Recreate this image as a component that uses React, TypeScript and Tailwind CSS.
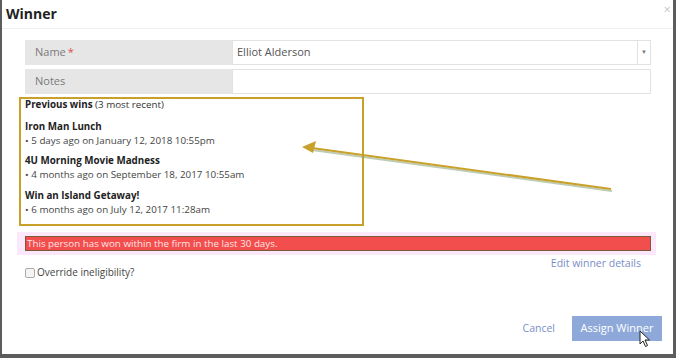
import React from "react";

const wins = [
  { title: "Iron Man Lunch", when: "5 days ago on January 12, 2018 10:55pm", gap: "mt-[9px]" },
  { title: "4U Morning Movie Madness", when: "4 months ago on September 18, 2017 10:55am", gap: "mt-[6px]" },
  { title: "Win an Island Getaway!", when: "6 months ago on July 12, 2017 11:28am", gap: "mt-[7px]" },
];

function Arrow() {
  return (
    <svg className="pointer-events-none absolute left-0 top-0" width="676" height="358" aria-hidden>
      <line x1="612" y1="191" x2="312" y2="150" stroke="#7f9a6a" strokeWidth="2" opacity="0.5" />
      <line x1="611" y1="189" x2="312" y2="148" stroke="#c9a12a" strokeWidth="2" />
      <path d="M302 147 L316 141 L313 153 Z" fill="#c9a12a" />
    </svg>
  );
}

function Cursor() {
  return (
    <svg className="absolute left-[639px] top-[330px]" width="12" height="18" viewBox="0 0 12 18" aria-hidden>
      <path d="M1 1 L1 14 L4 11 L6.5 16.5 L8.5 15.5 L6 10 L10.5 10 Z" fill="#fff" stroke="#222" strokeWidth="1" />
    </svg>
  );
}

export default function App() {
  return (
    <div
      className="relative w-[676px] h-[358px] overflow-hidden bg-[#5c5c5c] pl-[2px] pr-[3px] pb-[4px]"
      style={{ fontFamily: "'Open Sans', 'Liberation Sans', sans-serif" }}
    >
      <div className="flex h-full flex-col bg-white">
        {/* header */}
        <div className="flex h-[29px] shrink-0 items-center justify-between border-b border-[#efefef] pl-[4px] pr-[2px]">
          <span className="mb-[2px] text-[14px] font-bold text-[#222]">Winner</span>
          <span className="mb-[10px] text-[13px] leading-none text-[#c8c8c8]">×</span>
        </div>

        <div className="flex flex-1 flex-col pl-[23px] pr-[22px] pt-[11px]">
          {/* name */}
          <div className="flex h-[25px] text-[11px]">
            <div className="flex w-[207px] items-center bg-[#e6e6e6] pl-[10px] text-[#7a7a7a]">
              Name<span className="ml-[2px] text-[#d9534f]">*</span>
            </div>
            <div className="flex flex-1 items-center border border-[#e2e2e2] text-[#555]">
              <span className="flex-1 pl-[4px]">Elliot Alderson</span>
              <span className="flex h-full w-[13px] items-center justify-center border-l border-[#e2e2e2] text-[6px] text-[#777]">
                ▼
              </span>
            </div>
          </div>

          {/* notes */}
          <div className="mt-[4px] flex h-[25px] text-[11px]">
            <div className="flex w-[207px] items-center bg-[#e6e6e6] pl-[10px] text-[#7a7a7a]">Notes</div>
            <div className="flex-1 border border-[#e2e2e2]" />
          </div>

          {/* previous wins */}
          <div className="ml-[-6px] mt-[3px] h-[129px] w-[345px] border-2 border-[#c9a12a] pl-[4px] text-[9.8px] text-[#333]">
            <div className="leading-[12px]">
              <span className="font-bold text-[#222]">Previous wins</span> (3 most recent)
            </div>
            {wins.map((w) => (
              <div key={w.title} className={w.gap}>
                <div className="font-bold leading-[14px] text-[#222]">{w.title}</div>
                <div className="leading-[14px] text-[#444]">• {w.when}</div>
              </div>
            ))}
          </div>

          {/* warning */}
          <div className="ml-[-8px] mr-[-5px] mt-[6px] bg-[#fde8fb] px-[8px] py-[4px] pr-[5px]">
            <div className="h-[15px] border border-[#7a5a3a] bg-[#f24e4e] pl-[1px] text-[9.8px] leading-[13px] text-[#ffe4e4]">
              This person has won within the firm in the last 30 days.
            </div>
          </div>

          <div className="flex items-start justify-between">
            <label className="mt-[10px] flex items-center gap-[2px] text-[10px] text-[#444]">
              <span className="inline-block h-[10px] w-[10px] rounded-[2px] border border-[#aaa] bg-[#f4f4f4]" />
              Override ineligibility?
            </label>
            <span className="mr-[10px] mt-[1px] text-[10.5px] text-[#7a8ec8]">Edit winner details</span>
          </div>

          <div className="mt-auto mb-[13px] mr-[-11px] flex items-center justify-end gap-[17px]">
            <span className="text-[10.5px] text-[#7a8ec8]">Cancel</span>
            <div className="flex h-[25px] w-[90px] items-center justify-center bg-[#8ea9d9] text-[11px] text-white">
              Assign Winner
            </div>
          </div>
        </div>
      </div>
      <Arrow />
      <Cursor />
    </div>
  );
}
